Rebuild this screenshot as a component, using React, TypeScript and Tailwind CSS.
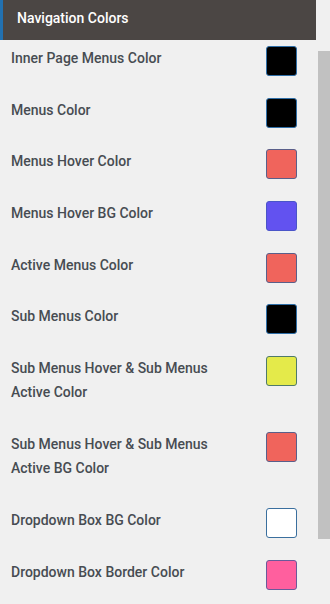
const rows: { label: string; color: string; border: string }[] = [
  { label: "Inner Page Menus Color", color: "#000000", border: "#2f6fa8" },
  { label: "Menus Color", color: "#000000", border: "#2f6fa8" },
  { label: "Menus Hover Color", color: "#f0645c", border: "#5a5f8a" },
  { label: "Menus Hover BG Color", color: "#6252f0", border: "#4a55c8" },
  { label: "Active Menus Color", color: "#f0645c", border: "#5a5f8a" },
  { label: "Sub Menus Color", color: "#000000", border: "#2f6fa8" },
  { label: "Sub Menus Hover & Sub Menus Active Color", color: "#e4ea4a", border: "#4f7a6a" },
  { label: "Sub Menus Hover & Sub Menus Active BG Color", color: "#f0645c", border: "#5a5f8a" },
  { label: "Dropdown Box BG Color", color: "#ffffff", border: "#3a6f9e" },
  { label: "Dropdown Box Border Color", color: "#ff5f9e", border: "#6a5a9a" },
];

export default function App() {
  return (
    <div className="flex w-[330px] h-[604px] overflow-hidden bg-[#f0f0f0] [font-family:Roboto,'Liberation_Sans',sans-serif]">
      <div className="w-[316px] flex flex-col">
        {/* Section header */}
        <div className="h-[40px] shrink-0 flex items-center bg-[#4b4644] border-l-[3px] border-[#2271b1] pl-[14px] pb-[4px]">
          <span className="text-white text-[14px] font-medium">Navigation Colors</span>
        </div>

        {/* Colour rows */}
        <div className="flex flex-col gap-[27.4px] pt-[6px] pl-[11px] pr-[19px]">
          {rows.map((row) => (
            <div key={row.label} className="flex items-start justify-between">
              <span className="w-[210px] text-[14px] leading-[24.3px] font-medium text-[#474c52]">
                {row.label}
              </span>
              <div className="h-[24px]">
                <div
                  className="w-[31px] h-[30px] rounded-[3px] border"
                  style={{ backgroundColor: row.color, borderColor: row.border }}
                ></div>
              </div>
            </div>
          ))}
        </div>
      </div>

      {/* Scrollbar */}
      <div className="w-[14px] pl-[2px]">
        <div className="mt-[51px] h-[488px] w-[12px] bg-[#c1c1c1]"></div>
      </div>
    </div>
  );
}
